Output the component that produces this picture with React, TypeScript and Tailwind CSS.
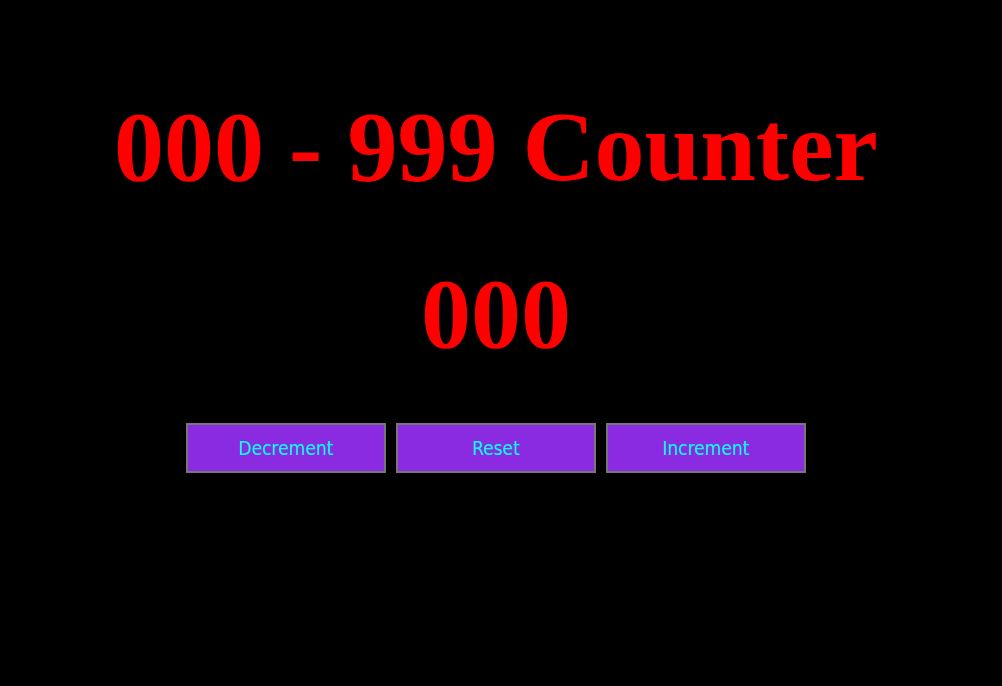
export default function App() {
  const value = 0

  return (
    <div className="min-h-[686px] w-full bg-black pr-[10px] pt-[91px]">
      <h1 className="text-center font-['Liberation_Serif','Times_New_Roman',serif] text-[100px] font-bold leading-[111px] text-[#ff0000]">
        000 - 999 Counter
      </h1>
      <div className="mt-[56px] text-center font-['Liberation_Serif','Times_New_Roman',serif] text-[100px] font-bold leading-[111px] text-[#ff0000]">
        {String(value).padStart(3, "0")}
      </div>
      <div className="mt-[54px] flex justify-center gap-[10px]">
        {["Decrement", "Reset", "Increment"].map((label) => (
          <button
            key={label}
            className="h-[50px] w-[200px] border-2 border-[#767676] bg-[#8a2be2] font-['DejaVu_Sans_Condensed','DejaVu_Sans',sans-serif] text-[19px] text-[#00ffff]"
          >
            {label}
          </button>
        ))}
      </div>
    </div>
  )
}
